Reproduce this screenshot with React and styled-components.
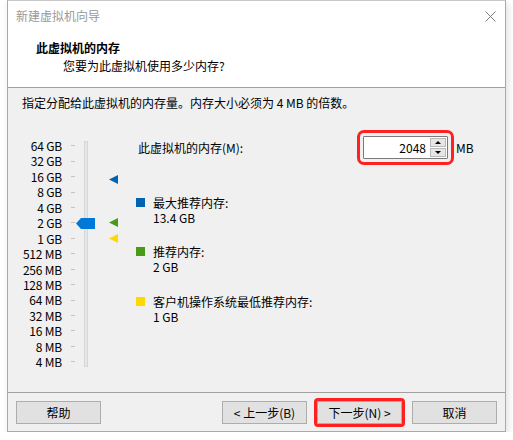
import React from 'react';
import styled, { createGlobalStyle } from 'styled-components';

const GlobalStyle = createGlobalStyle`
  html, body {
    margin: 0;
    padding: 0;
    background: #fff;
  }
  body {
    font-family: "Noto Sans CJK SC", "Noto Sans", sans-serif;
    font-size: 12px;
    color: #000;
  }
`;

const Window = styled.div`
  box-sizing: border-box;
  width: 499px;
  height: 432px;
  margin-left: 7px;
  border: 1px solid #a9a9a9;
  border-top-color: #c8c8c8;
  background: #f0f0f0;
  display: flex;
  flex-direction: column;
  box-shadow: 2px 3px 8px rgba(0, 0, 0, 0.12);
`;

const TitleBar = styled.div`
  height: 30px;
  background: #fff;
  display: flex;
  align-items: center;
  justify-content: space-between;
  padding: 0 9px 0 8px;
  color: #999;
  line-height: 16px;
`;

const Header = styled.div`
  box-sizing: border-box;
  height: 57px;
  background: #fff;
  border-bottom: 1px solid #a0a0a0;
  padding-top: 8px;
`;

const HeaderTitle = styled.div`
  font-weight: bold;
  padding-left: 28px;
  line-height: 17px;
`;

const HeaderSub = styled.div`
  padding-left: 55px;
  line-height: 17px;
  margin-top: 1px;
`;

const Body = styled.div`
  flex: 1;
  display: flex;
  flex-direction: column;
`;

const Hint = styled.div`
  padding: 7px 0 0 14px;
  line-height: 16px;
`;

const Main = styled.div`
  display: flex;
  margin-top: 25px;
`;

const Slider = styled.div`
  position: relative;
  width: 130px;
  height: 232px;
  margin-top: 2px;
  display: flex;
`;

const Labels = styled.div`
  display: grid;
  grid-auto-rows: 15.45px;
  width: 54px;
  text-align: right;
  line-height: 15.45px;
  font-size: 12px;
  letter-spacing: -0.2px;
`;

const Ticks = styled.div`
  display: grid;
  grid-auto-rows: 15.45px;
  width: 4px;
  margin-left: 9px;
`;

const Tick = styled.div`
  display: flex;
  align-items: center;
  &::before {
    content: "";
    width: 4px;
    height: 1px;
    background: #c4c4c4;
  }
`;

const Track = styled.div`
  box-sizing: border-box;
  width: 4px;
  height: 226px;
  margin: 3px 0 0 9px;
  border: 1px solid #d6d6d6;
  background: #e7e7e7;
`;

const Thumb = styled.div`
  position: absolute;
  left: 68px;
  top: 80px;
  width: 19px;
  height: 11px;
  background: #0078d7;
  clip-path: polygon(5px 0, 100% 0, 100% 100%, 5px 100%, 0 50%);
`;

const Marker = styled.div`
  position: absolute;
  left: 101px;
  width: 9px;
  height: 9px;
  background: ${p => p.color};
  clip-path: polygon(0 50%, 100% 0, 100% 100%);
`;

const Side = styled.div`
  display: flex;
  flex-direction: column;
`;

const MemRow = styled.div`
  display: flex;
  align-items: center;
  height: 23px;
`;

const MemLabel = styled.div`
  width: 225px;
`;

const SpinBox = styled.div`
  box-sizing: border-box;
  width: 85px;
  height: 23px;
  display: flex;
  border: 1px solid #7a7a7a;
  background: #fff;
  outline: 3px solid #ff2020;
  outline-offset: 3px;
  border-radius: 1px;
`;

const SpinValue = styled.div`
  flex: 1;
  text-align: right;
  padding-right: 4px;
  line-height: 21px;
`;

const SpinButtons = styled.div`
  width: 16px;
  display: flex;
  flex-direction: column;
  gap: 1px;
  padding: 1px 1px 1px 0;
`;

const SpinBtn = styled.div`
  flex: 1;
  border: 1px solid #b9b9b9;
  background: #e6e6e6;
  display: flex;
  align-items: center;
  justify-content: center;
  &::before {
    content: "";
    width: 0;
    height: 0;
    border-left: 3px solid transparent;
    border-right: 3px solid transparent;
    ${p => (p.down ? 'border-top: 3px solid #000;' : 'border-bottom: 3px solid #000;')}
  }
`;

const Unit = styled.div`
  margin-left: 8px;
`;

const Legend = styled.div`
  display: flex;
  flex-direction: column;
  gap: 19.5px;
  margin: 35.5px 0 0 -2px;
`;

const LegendItem = styled.div`
  display: flex;
  gap: 8px;
  line-height: 15px;
`;

const LegendText = styled.div`
  white-space: pre-line;
`;

const Swatch = styled.div`
  width: 9px;
  height: 9px;
  margin-top: 3px;
  background: ${p => p.color};
`;

const Footer = styled.div`
  box-sizing: border-box;
  height: 39px;
  border-top: 1px solid #a0a0a0;
  padding: 8px 8px 0;
  display: flex;
  gap: 10px;
`;

const Button = styled.button`
  box-sizing: border-box;
  width: 85px;
  height: 23px;
  padding: 0;
  border: 1px solid #adadad;
  background: #e1e1e1;
  font: inherit;
  color: #000;
  margin-left: ${p => (p.push ? 'auto' : '0')};
  outline: ${p => (p.marked ? '3px solid #ff2020' : 'none')};
  outline-offset: 0;
  border-radius: ${p => (p.marked ? '1px' : '0')};
`;

const sizes = [
  '64 GB', '32 GB', '16 GB', '8 GB', '4 GB', '2 GB', '1 GB',
  '512 MB', '256 MB', '128 MB', '64 MB', '32 MB', '16 MB', '8 MB', '4 MB',
];

const legends = [
  { color: '#0063b1', title: '最大推荐内存:', value: '13.4 GB' },
  { color: '#4a9a17', title: '推荐内存:', value: '2 GB' },
  { color: '#ffd800', title: '客户机操作系统最低推荐内存:', value: '1 GB' },
];

const CloseIcon = () => (
  <svg width="11" height="11" viewBox="0 0 11 11">
    <path d="M0.5 0.5L10.5 10.5M10.5 0.5L0.5 10.5" stroke="#7a7a7a" strokeWidth="1" />
  </svg>
);

const App = () => (
  <>
    <GlobalStyle />
    <Window>
      <TitleBar>
        <span>新建虚拟机向导</span>
        <CloseIcon />
      </TitleBar>
      <Header>
        <HeaderTitle>此虚拟机的内存</HeaderTitle>
        <HeaderSub>您要为此虚拟机使用多少内存?</HeaderSub>
      </Header>
      <Body>
        <Hint>指定分配给此虚拟机的内存量。内存大小必须为 4 MB 的倍数。</Hint>
        <Main>
          <Slider>
            <Labels>
              {sizes.map(s => <div key={s}>{s}</div>)}
            </Labels>
            <Ticks>
              {sizes.map(s => <Tick key={s} />)}
            </Ticks>
            <Track />
            <Thumb />
            <Marker color="#0063b1" style={{ top: 37 }} />
            <Marker color="#4a9a17" style={{ top: 80 }} />
            <Marker color="#ffd800" style={{ top: 96 }} />
          </Slider>
          <Side>
            <MemRow>
              <MemLabel>此虚拟机的内存(M):</MemLabel>
              <SpinBox>
                <SpinValue>2048</SpinValue>
                <SpinButtons>
                  <SpinBtn />
                  <SpinBtn down />
                </SpinButtons>
              </SpinBox>
              <Unit>MB</Unit>
            </MemRow>
            <Legend>
              {legends.map(l => (
                <LegendItem key={l.title}>
                  <Swatch color={l.color} />
                  <LegendText>{`${l.title}\n${l.value}`}</LegendText>
                </LegendItem>
              ))}
            </Legend>
          </Side>
        </Main>
      </Body>
      <Footer>
        <Button>帮助</Button>
        <Button push>&lt; 上一步(B)</Button>
        <Button marked>下一步(N) &gt;</Button>
        <Button>取消</Button>
      </Footer>
    </Window>
  </>
);

export default App;
